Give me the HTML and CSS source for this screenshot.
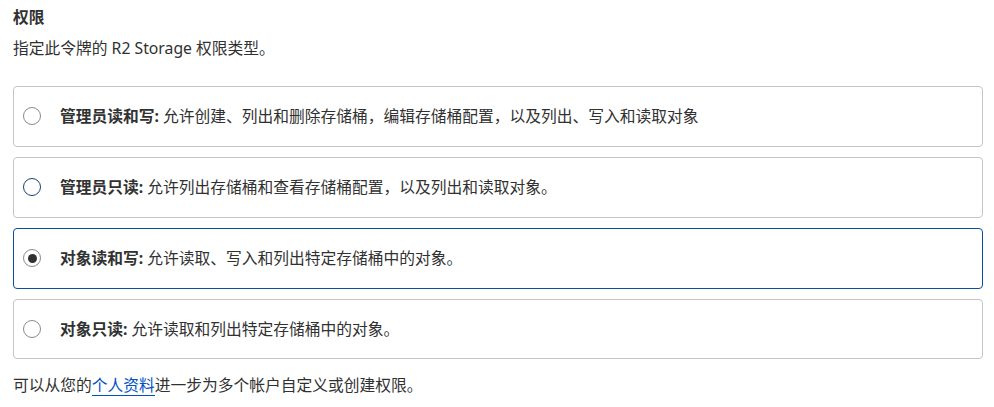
FILE: index.html
```html
<!DOCTYPE html>
<html lang="zh-CN">
<head>
<meta charset="utf-8">
<link rel="stylesheet" href="styles.css">
</head>
<body>
<div class="section">
  <div class="title">权限</div>
  <div class="desc">指定此令牌的 R2 Storage 权限类型。</div>
  <div class="options">
    <label class="option">
      <span class="radio"></span>
      <span class="text"><b>管理员读和写:</b> 允许创建、列出和删除存储桶，编辑存储桶配置，以及列出、写入和读取对象</span>
    </label>
    <label class="option">
      <span class="radio hover"></span>
      <span class="text"><b>管理员只读:</b> 允许列出存储桶和查看存储桶配置，以及列出和读取对象。</span>
    </label>
    <label class="option selected">
      <span class="radio checked"></span>
      <span class="text"><b>对象读和写:</b> 允许读取、写入和列出特定存储桶中的对象。</span>
    </label>
    <label class="option">
      <span class="radio"></span>
      <span class="text"><b>对象只读:</b> 允许读取和列出特定存储桶中的对象。</span>
    </label>
  </div>
  <div class="footer">可以从您的<a href="#" class="link">个人资料</a>进一步为多个帐户自定义或创建权限。</div>
</div>
</body>
</html>
```
FILE: styles.css
```css
* { box-sizing: border-box; }
body {
  margin: 0;
  background: #fff;
  color: #313131;
  font-family: "Noto Sans", "Noto Sans CJK SC", sans-serif;
  font-size: 15.75px;
}
.section {
  padding: 6px 11px 0 13px;
}
.title {
  font-weight: 700;
  line-height: 22px;
}
.desc {
  margin-top: 9px;
  line-height: 22px;
}
.options {
  margin-top: 27px;
  display: flex;
  flex-direction: column;
  gap: 10.1px;
}
.option {
  display: flex;
  align-items: center;
  height: 60.8px;
  border: 1px solid #c5c5c5;
  border-radius: 4px;
  padding-left: 9px;
}
.option.selected {
  border-color: #0a4ea2;
}
.radio {
  width: 18px;
  height: 18px;
  border: 1px solid #8a8a8a;
  border-radius: 50%;
  flex: none;
  display: flex;
  align-items: center;
  justify-content: center;
}
.radio.hover {
  border-color: #1c3e73;
}
.radio.checked::after {
  content: "";
  width: 9px;
  height: 9px;
  border-radius: 50%;
  background: #313131;
}
.text {
  margin-left: 19px;
  line-height: 22px;
}
.text b { font-weight: 700; }
.footer {
  margin-top: 15px;
  line-height: 22px;
}
.link {
  display: inline-block;
  color: #0051c3;
  text-decoration: none;
  line-height: 20px;
  border-bottom: 1px solid #0051c3;
}
```
